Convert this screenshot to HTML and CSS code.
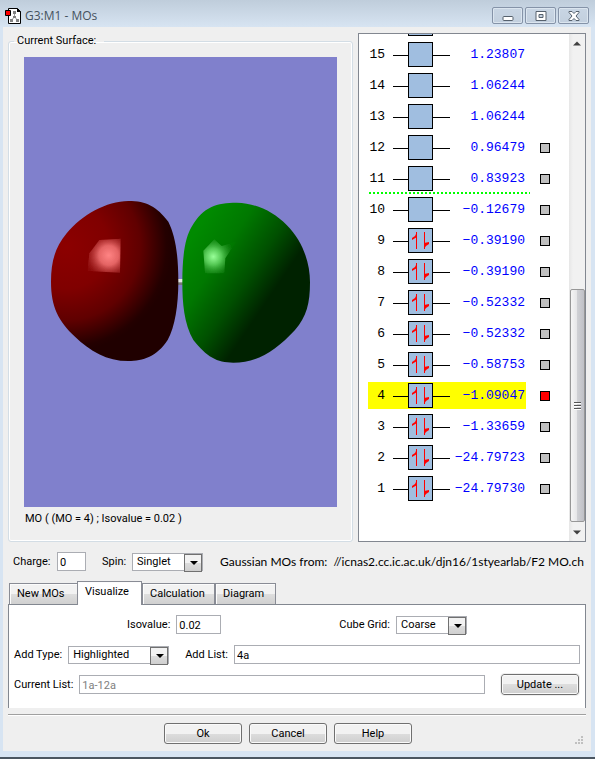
FILE: index.html
```html
<!DOCTYPE html>
<html lang="en">
<head>
  <meta charset="UTF-8" />
  <meta name="viewport" content="width=device-width, initial-scale=1.0"/>
  <title>G3:M1 - MOs</title>
  <link rel="stylesheet" href="styles.css">
</head>
<body>

  <header class="titlebar">
    <svg class="app-icon" width="16" height="16" viewBox="0 0 16 16">
      <path d="M3.500 .5h9l3 3v12h-12z" fill="#fff" stroke="#000"/>
      <path d="M12 0v4h4z" fill="#000"/>
      <path d="M9.500 5v5M9.500 9l-3 3M9.500 9l3 3" stroke="#999" fill="none"/>
      <path d="M8 3h3v3H8zM8 8h3v2H8zM5 11h3v3H5zM11 11h3v3h-3z" fill="#808080"/>
      <path d="M.5 2.500h5v5h-5z" fill="#f00" stroke="#000"/>
    </svg>
    <h1>G3:M1 - MOs</h1>
    <div class="window-buttons">
      <button type="button" aria-label="Minimize">
        <svg width="12" height="10" viewBox="0 0 12 10"><rect x="1" y="5.500" width="10" height="4" rx="1" fill="#fff" stroke="#56616d"/></svg>
      </button>
      <button type="button" aria-label="Maximize">
        <svg width="12" height="10" viewBox="0 0 12 10"><path d="M1 .5h10v9H1zM4 3.500h4v3H4z" fill="#fff" stroke="#56616d" fill-rule="evenodd"/></svg>
      </button>
      <button type="button" aria-label="Close">
        <svg width="12" height="10" viewBox="0 0 12 10"><path d="M1 .5h3l2 2 2-2h3v1L8 5l3 3.500v1H8l-2-2-2 2H1v-1L4 5 1 1.500z" fill="#fff" stroke="#56616d"/></svg>
      </button>
    </div>
  </header>

  <main class="client">
    <div class="top">
      <fieldset class="surface">
        <legend>Current Surface:</legend>
        <svg class="viewport" viewBox="0 0 313 450">
          <defs>
            <radialGradient id="redShade" gradientUnits="userSpaceOnUse" cx="80" cy="170" r="315">
              <stop offset="0" stop-color="#8c0000"/>
              <stop offset=".4" stop-color="#800000"/>
              <stop offset=".7" stop-color="#600000"/>
              <stop offset=".95" stop-color="#240000"/>
              <stop offset="1" stop-color="#200000"/>
            </radialGradient>
            <linearGradient id="greenShade" gradientUnits="userSpaceOnUse" x1="490" y1="90" x2="734" y2="255">
              <stop offset="0" stop-color="#008a00"/>
              <stop offset=".35" stop-color="#007800"/>
              <stop offset=".7" stop-color="#005000"/>
              <stop offset="1" stop-color="#002200"/>
            </linearGradient>
            <radialGradient id="redGlow" gradientUnits="userSpaceOnUse" cx="206" cy="196" r="74">
              <stop offset="0" stop-color="#ff8484"/>
              <stop offset=".4" stop-color="#e46464"/>
              <stop offset="1" stop-color="#981818" stop-opacity=".3"/>
            </radialGradient>
            <radialGradient id="greenGlow" gradientUnits="userSpaceOnUse" cx="520" cy="200" r="62">
              <stop offset="0" stop-color="#98ff98"/>
              <stop offset=".4" stop-color="#54c854"/>
              <stop offset="1" stop-color="#188818" stop-opacity=".2"/>
            </radialGradient>
            <filter id="soft"><feGaussianBlur stdDeviation="2"/></filter>
          </defs>
          <rect width="313" height="450" fill="#8080cc"/>
          <svg x="16" y="133" width="280" height="185" viewBox="0 0 840 555">
            <path d="M410 267h22v18h-22z" fill="#777"/>
            <path d="M410 267h22v10h-22z" fill="#e4e4e4"/>
            <path d="M33 275C33 215 45 172 80 130C125 75 200 33 265 33C320 33 350 50 385 95C405 135 415 190 415 275C415 345 405 410 383 450C350 500 310 513 265 513C200 513 150 483 105 440C55 393 33 350 33 275Z" fill="url(#redShade)"/>
            <path d="M427 275C427 190 437 140 455 110C490 50 530 38 590 38C650 40 700 65 740 105C790 155 810 220 810 277C810 340 800 380 765 420C705 485 650 518 580 518C530 518 500 500 460 450C432 400 427 340 427 275Z" fill="url(#greenShade)"/>
            <path d="M178 150L242 146L240 248L142 243L148 190Z" fill="url(#redGlow)" filter="url(#soft)"/>
            <path d="M523 148L545 168L588 155L556 205L553 250L495 250L490 182Z" fill="url(#greenGlow)" filter="url(#soft)"/>
          </svg>
        </svg>
        <p>MO ( (MO = 4) ; Isovalue = 0.02 )</p>
      </fieldset>

      <div class="levels">
        <table>
          <tbody id="levelRows"></tbody>
        </table>
        <div class="scrollbar">
          <svg width="8" height="5" viewBox="0 0 8 5"><path d="M0 4.500L4 .5l4 4z" fill="#404040"/></svg>
          <div class="thumb"></div>
          <svg width="8" height="5" viewBox="0 0 8 5"><path d="M0 .5h8l-4 4z" fill="#404040"/></svg>
        </div>
      </div>
    </div>

    <div class="molecule">
      <label for="charge">Charge:</label>
      <input type="text" id="charge" class="charge" value="0">
      <label for="spin">Spin:</label>
      <span class="select">
        <select id="spin"><option>Singlet</option></select>
      </span>
      <span class="source">Gaussian MOs from:&nbsp; //icnas2.cc.ic.ac.uk/djn16/1styearlab/F2 MO.ch</span>
    </div>

    <div class="tabs" role="tablist">
      <button type="button" role="tab" class="tab-new">New MOs</button>
      <button type="button" role="tab" class="tab-visualize active" aria-selected="true">Visualize</button>
      <button type="button" role="tab" class="tab-calculation">Calculation</button>
      <button type="button" role="tab" class="tab-diagram">Diagram</button>
    </div>

    <div class="panel">
      <div class="row spread">
        <div class="field">
          <label for="isovalue">Isovalue:</label>
          <input type="text" id="isovalue" class="isovalue" value="0.02">
        </div>
        <div class="field">
          <label for="grid">Cube Grid:</label>
          <span class="select">
            <select id="grid"><option>Coarse</option></select>
          </span>
        </div>
      </div>
      <div class="row">
        <div class="field">
          <label for="addType">Add Type:</label>
          <span class="select wide">
            <select id="addType"><option>Highlighted</option></select>
          </span>
        </div>
        <div class="field grow">
          <label for="addList">Add List:</label>
          <input type="text" id="addList" value="4a">
        </div>
      </div>
      <div class="row">
        <div class="field grow">
          <label for="currentList">Current List:</label>
          <input type="text" id="currentList" value="1a-12a" disabled>
        </div>
        <button type="button" class="push update">Update ...</button>
      </div>
    </div>

    <footer class="actions">
      <button type="button" class="push">Ok</button>
      <button type="button" class="push">Cancel</button>
      <button type="button" class="push">Help</button>
      <svg class="grip" width="8" height="8" viewBox="0 0 8 8"><path d="M6 0h2v2H6zM3 3h2v2H3zM6 3h2v2H6zM0 6h2v2H0zM3 6h2v2H3zM6 6h2v2H6z" fill="#c0c0c0"/></svg>
    </footer>
  </main>

  <script>
    // Orbital energies from MO 15 down to MO 1
    const energies = [
      "1.23807", "1.06244", "1.06244", "0.96479", "0.83923",
      "−0.12679", "−0.39190", "−0.39190", "−0.52332", "−0.52332",
      "−0.58753", "−1.09047", "−1.33659", "−24.79723", "−24.79730"
    ];
    const occupied = 9;
    const lastCalculated = 12;
    const selected = 4;

    const rows = document.getElementById("levelRows");
    const spins = '<path d="M23.500 5v17M31.500 5v17" stroke="#f00"/>' +
      '<path d="M24 5v5l-5 3v-2l3-2zM31 22v-6l5-1v2l-3 2z" fill="#f00"/>';

    function addRow(mo, energy) {
      const row = document.createElement("tr");
      row.classList.toggle("selected", mo === selected);
      row.classList.toggle("gap-below", mo === 11);

      row.innerHTML = `
        <td class="number">${mo}</td>
        <td class="level">
          <svg width="57" height="27" viewBox="0 0 57 27">
            <path d="M0 14.500h57" stroke="#000"/>
            <rect x="15.500" y="1.500" width="24" height="24" fill="#a0bee0" stroke="#000"/>
            ${mo <= occupied ? spins : ""}
          </svg>
        </td>
        <td class="energy">${energy}</td>
        <td class="pick">${mo <= lastCalculated
          ? `<input type="checkbox" aria-label="MO ${mo}"${mo === selected ? " checked" : ""}>`
          : ""}</td>`;
      rows.appendChild(row);
    }

    // the level above is only partly scrolled into view
    addRow("", "");
    energies.forEach((energy, i) => addRow(energies.length - i, energy));
  </script>

</body>
</html>
```
FILE: styles.css
```css
* {
  box-sizing: border-box;
}

body {
  margin: 0;
  padding: 0 4px 6px 3px;
  background-color: #d7e4f2;
  border-bottom: 2px solid #4a5560;
  font-family: Roboto, "Liberation Sans", sans-serif;
  font-size: 11px;
  line-height: 16px;
  color: #000;
}

button, input, select {
  font: inherit;
  color: inherit;
  margin: 0;
}

/* Title bar */
.titlebar {
  display: flex;
  align-items: center;
  height: 27px;
  margin: 0 -4px 0 -3px;
  padding: 4px 6px 0 5px;
  background: linear-gradient(#bfcddb, #d7e4f2);
}

.titlebar h1 {
  flex: 1;
  margin: 0 0 0 4px;
  font-family: "Open Sans", "Noto Sans", sans-serif;
  font-size: 12px;
  font-weight: normal;
  color: #45525e;
}

.window-buttons {
  display: flex;
  gap: 2px;
}

.window-buttons button {
  display: flex;
  align-items: center;
  justify-content: center;
  width: 31px;
  height: 17px;
  padding: 0;
  border: 1px solid #8593a8;
  border-radius: 2px;
  background: linear-gradient(#c9d6e4, #c2cfde);
  box-shadow: inset 0 0 0 1px #dbe5ef;
}

/* Window contents */
.client {
  padding: 6px 5px 7px;
  background-color: #efefef;
}

.top {
  display: flex;
  gap: 5px;
}

.surface {
  flex: 1;
  min-width: 0;
  margin: 0;
  padding: 8px 15px 10px;
  border: 1px solid #d3dde5;
  border-radius: 3px;
  box-shadow: inset 0 0 0 1px #fff;
}

.surface legend {
  margin-left: -10px;
  padding: 0 8px 0 3px;
}

.viewport {
  display: block;
  width: 100%;
}

.surface p {
  margin: 0;
  padding-left: 1px;
  line-height: 24px;
}

/* Orbital energy levels */
.levels {
  display: flex;
  align-items: flex-end;
  justify-content: space-between;
  width: 228px;
  height: 509px;
  overflow: hidden;
  border: 1px solid #828790;
  background-color: #fff;
}

.levels table {
  margin: 0 0 37px 9px;
  border-spacing: 0;
  font-family: "Liberation Mono", monospace;
  font-size: 13px;
}

.levels td {
  height: 31px;
  padding: 0;
  border: 2px solid transparent;
  border-width: 2px 0;
  background-clip: padding-box;
}

.number {
  width: 17px;
  text-align: right;
}

.level {
  width: 65px;
}

.level svg {
  display: block;
  margin-left: 8px;
}

.levels .energy {
  width: 76px;
  padding-right: 1px;
  text-align: right;
  color: #00f;
}

.pick {
  width: 24px;
}

.pick input {
  display: block;
  appearance: none;
  width: 10px;
  height: 10px;
  margin-left: 14px;
  border: 1px solid #000;
  background-color: #c0c0c0;
}

.pick input:checked {
  background-color: #f00;
}

.selected td:not(.pick) {
  background-color: #ff0;
}

.gap-below {
  background: repeating-linear-gradient(to right, #0f0 0 2px, transparent 2px 4px) 1px 100% / 161px 2px no-repeat;
}

.scrollbar {
  display: flex;
  flex-direction: column;
  align-items: center;
  width: 16px;
  height: 100%;
  padding: 7px 0 6px;
  background: linear-gradient(to right, #e6e6e6, #f1f1f1 4px, #f1f1f1);
}

.thumb {
  display: flex;
  align-items: center;
  justify-content: center;
  width: 15px;
  height: 233px;
  margin: auto 0 8px;
  border: 1px solid #979797;
  border-radius: 2px;
  background: linear-gradient(to right, #f5f5f5, #e6e6e8 45%, #cfd0d4 50%, #bfc0c6);
}

.thumb::before {
  content: "";
  width: 7px;
  height: 8px;
  background: repeating-linear-gradient(#555 0 1px, #fff 1px 2px, transparent 2px 3px);
}

/* Text boxes and drop-downs */
input[type="text"] {
  min-width: 0;
  height: 19px;
  padding: 1px 2px 0;
  border: 1px solid #abadb3;
  background-color: #fff;
}

input[type="text"]:disabled {
  color: #808080;
}

.select {
  position: relative;
  display: flex;
  width: 71px;
  height: 18px;
}

.select.wide {
  width: 101px;
}

.select select {
  appearance: none;
  width: 100%;
  height: 18px;
  padding: 0 20px 1px 4px;
  border: 1px solid #abadb3;
  border-radius: 0;
  background-color: #fff;
}

.select::before,
.select::after {
  content: "";
  position: absolute;
  pointer-events: none;
}

.select::before {
  top: 1px;
  right: 1px;
  width: 16px;
  height: 16px;
  border: 1px solid #707070;
  background: linear-gradient(#f2f2f2 50%, #dcdcdc 50%, #cfcfcf);
}

.select::after {
  top: 8px;
  right: 5px;
  border: 4px solid transparent;
  border-top-color: #000;
  border-bottom-width: 0;
}

.molecule {
  display: flex;
  align-items: center;
  margin-top: 10px;
  padding-left: 5px;
}

.molecule label {
  flex: none;
  width: 44px;
}

.molecule .charge {
  width: 29px;
  margin-right: 16px;
}

.molecule .charge + label {
  width: 30px;
}

.molecule .select {
  flex: none;
}

.source {
  flex: 1;
  margin-left: 17px;
  white-space: nowrap;
  font-family: Lato, "Open Sans", sans-serif;
  font-size: 12px;
}

/* Tabs */
.tabs {
  display: flex;
  align-items: flex-end;
  height: 23px;
  margin-top: 10px;
  padding-left: 1px;
}

.tabs button {
  height: 21px;
  padding: 0 0 1px 7px;
  border: 1px solid #898c95;
  border-bottom: 0;
  text-align: left;
  background: linear-gradient(#f2f2f2 50%, #dedede 50%, #d0d0d0);
  box-shadow: inset 1px 1px 0 #fcfcfc;
}

.tabs .active {
  position: relative;
  height: 24px;
  margin: 0 0 -1px -1px;
  padding-bottom: 3px;
  background: #fff;
}

.tabs .tab-new {
  width: 69px;
}

.tabs .tab-visualize {
  width: 65px;
}

.tabs .tab-calculation {
  width: 73px;
}

.tabs .tab-diagram {
  width: 61px;
}

.panel {
  display: flex;
  flex-direction: column;
  gap: 11px;
  padding: 10px 5px 14px;
  border: 1px solid #828790;
  border-bottom: 0;
  background-color: #fff;
}

.row,
.field {
  display: flex;
  align-items: center;
}

.row {
  gap: 16px;
  height: 19px;
}

.spread {
  justify-content: space-between;
  padding: 0 113px;
}

.field {
  gap: 6px;
}

.grow,
.grow input {
  flex: 1;
}

.isovalue {
  width: 45px;
}

/* Push buttons */
.push {
  width: 78px;
  height: 21px;
  padding: 0;
  border: 1px solid #707070;
  border-radius: 3px;
  background: linear-gradient(#f2f2f2 50%, #dddddd 50%, #cfcfcf);
  box-shadow: inset 0 0 0 1px #fafafa;
}

.update {
  margin-right: 1px;
  outline: 1px solid #efefef;
}

.actions {
  position: relative;
  display: flex;
  justify-content: center;
  gap: 7px;
  margin-top: 6px;
  padding: 8px 18px 0 0;
  border-top: 1px solid #a0a0a0;
  box-shadow: inset 0 1px 0 #fff;
}

.grip {
  position: absolute;
  right: 3px;
  bottom: 0;
}
```
